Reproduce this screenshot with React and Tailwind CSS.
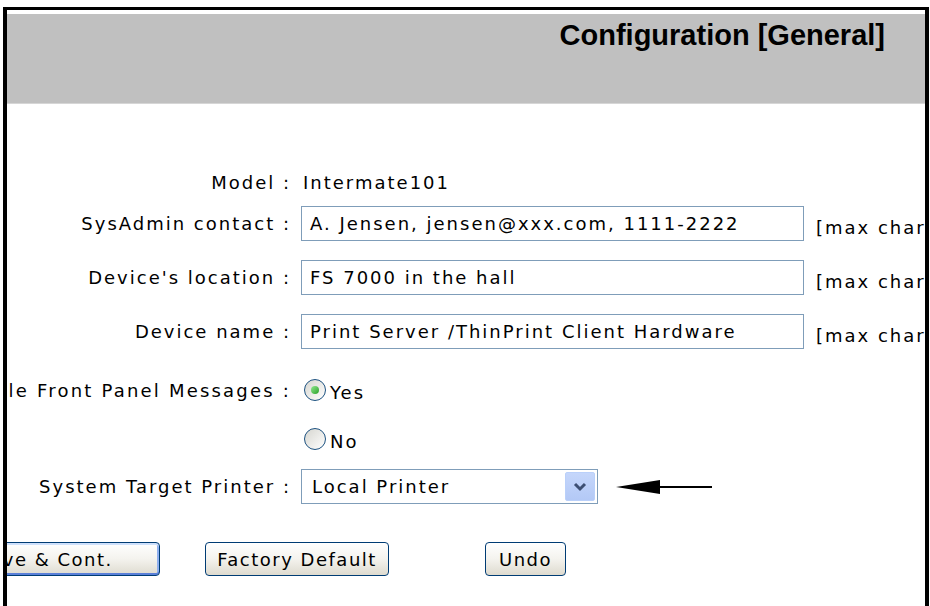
import React from "react";

const body = "font-['DejaVu_Sans',sans-serif] text-[18px] tracking-[2px] text-black";

function Label({ children, className = "" }) {
  return (
    <div className={`flex w-[288px] shrink-0 justify-end whitespace-nowrap pr-[4px] ${className}`}>
      {children}
    </div>
  );
}

function TextRow({ label, value, className = "" }) {
  return (
    <div className={`flex items-center ${className}`}>
      <Label>{label}</Label>
      <div className="ml-[6px] flex h-[35px] w-[503px] shrink-0 items-center border border-[#7f9db9] bg-white pl-[8px] whitespace-nowrap">
        {value}
      </div>
      <span className="ml-[12px] mt-[8px] whitespace-nowrap">[max chars: 64]</span>
    </div>
  );
}

function Radio({ checked, label, className = "" }) {
  return (
    <div className={`flex h-[34px] items-center ${className}`}>
      <div className="w-[288px] shrink-0" />
      <span className="ml-[9px] flex h-[22px] w-[22px] items-center justify-center rounded-full border-[1.5px] border-[#1c5180] bg-gradient-to-br from-[#d6d6d0] to-white">
        {checked && (
          <span className="h-[8px] w-[8px] rounded-full bg-gradient-to-br from-[#8ee88e] to-[#21a121]" />
        )}
      </span>
      <span className="ml-[4px] mt-[5px]">{label}</span>
    </div>
  );
}

function Button({ children, className = "", primary }) {
  return (
    <button
      className={`h-[34px] shrink-0 rounded-[4px] border border-[#003c74] bg-gradient-to-b from-white via-[#f4f3ee] to-[#dedbcf] tracking-[1.5px] ${
        primary ? "shadow-[inset_0_-2px_0_#5b80d8,inset_0_2px_0_#cee0fb,inset_-2px_0_0_#8fb0ef,inset_2px_0_0_#b9cff6]" : ""
      } ${className}`}
    >
      {children}
    </button>
  );
}

export default function App() {
  return (
    <div className={`h-[606px] w-[930px] overflow-hidden bg-white pl-[3px] pr-[1px] pt-[7px] ${body}`}>
      <div className="h-[620px] overflow-hidden border-l-4 border-r-4 border-t-[3px] border-black pt-[4px]">
        {/* page header */}
        <div className="flex h-[90px] justify-end border-b border-[#d6d6d6] bg-[#c0c0c0] pr-[40px]">
          <h1 className="font-['Liberation_Sans',sans-serif] text-[29px] font-bold tracking-normal">
            Configuration [General]
          </h1>
        </div>

        <div className="flex flex-col">
          <div className="mt-[61px] flex h-[34px] items-center">
            <Label>Model :</Label>
            <span className="ml-[8px]">Intermate101</span>
          </div>

          <TextRow className="mt-[7px]" label="SysAdmin contact :" value="A. Jensen, jensen@xxx.com, 1111-2222" />
          <TextRow className="mt-[19px]" label="Device's location :" value="FS 7000 in the hall" />
          <TextRow className="mt-[19px]" label="Device name :" value="Print Server /ThinPrint Client Hardware" />

          <div className="relative mt-[24px]">
            <div className="absolute left-0 top-0 flex h-[34px] items-center">
              <Label className="tracking-[2.2px]">Enable Front Panel Messages :</Label>
            </div>
            <Radio checked label="Yes" />
          </div>
          <Radio className="mt-[15px]" label="No" />

          <div className="mt-[13px] flex items-center">
            <Label>System Target Printer :</Label>
            <div className="ml-[6px] flex h-[35px] w-[297px] shrink-0 items-center justify-between border border-[#7f9db9] bg-white pl-[10px] pr-[2px]">
              <span>Local Printer</span>
              <span className="flex h-[29px] w-[30px] items-center justify-center rounded-[2px] border border-[#bad0fa] bg-gradient-to-b from-[#c5d6fb] to-[#b3c9f6]">
                <svg width="14" height="10" viewBox="0 0 14 10">
                  <path d="M2 2 L7 7 L12 2" fill="none" stroke="#3d4f73" strokeWidth="3" />
                </svg>
              </span>
            </div>
            <svg className="ml-[18px]" width="100" height="14" viewBox="0 0 100 14">
              <polygon points="0,7 44,0 44,14" fill="#000" />
              <line x1="40" y1="7" x2="96" y2="7" stroke="#000" strokeWidth="2" />
            </svg>
          </div>

          <div className="mt-[38px] flex items-center">
            <div className="flex w-[153px] shrink-0 justify-end">
              <Button primary className="w-[230px]">Save &amp; Cont.</Button>
            </div>
            <Button className="ml-[45px] w-[184px]">Factory Default</Button>
            <Button className="ml-[96px] w-[81px]">Undo</Button>
          </div>
        </div>
      </div>
    </div>
  );
}
